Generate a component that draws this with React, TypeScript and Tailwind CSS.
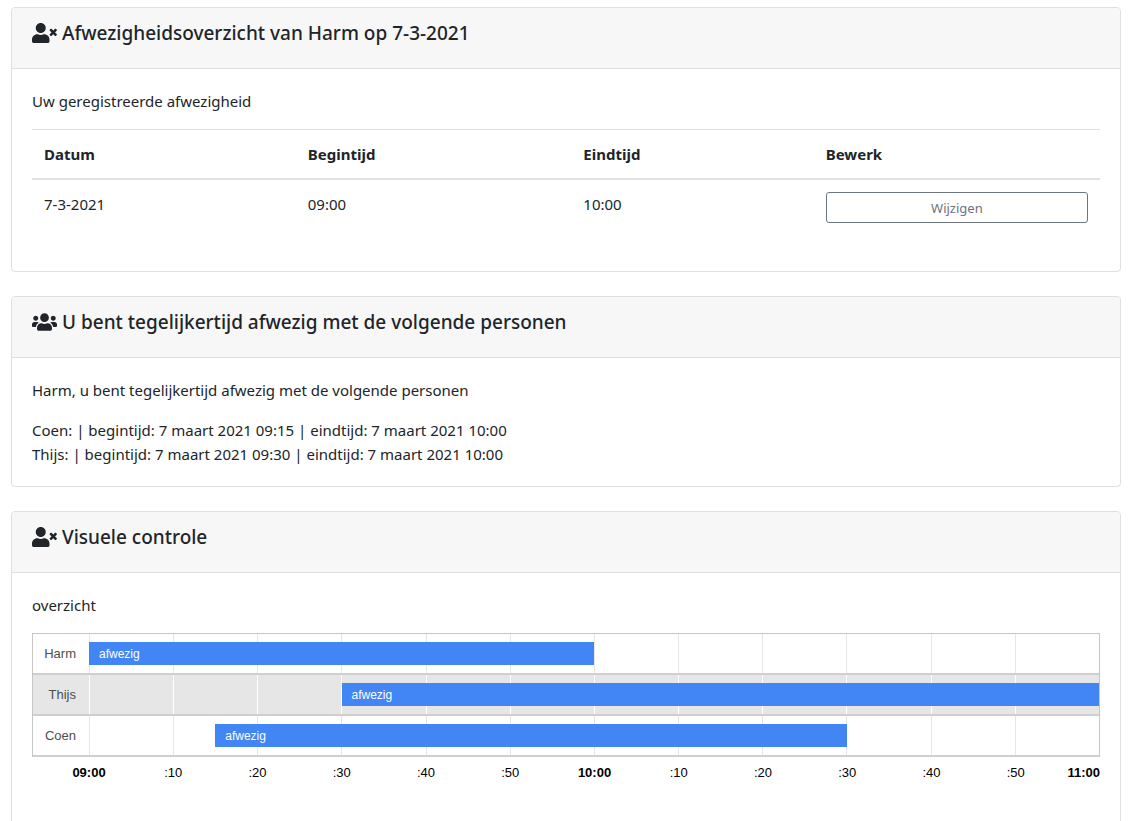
import type { ReactNode } from "react";
import { FaUserTimes, FaUsers } from "react-icons/fa";

type Absence = { name: string; start: number; end: number };

const CHART_START = 540;
const CHART_END = 660;

const absences: Absence[] = [
  { name: "Harm", start: 540, end: 600 },
  { name: "Thijs", start: 570, end: 660 },
  { name: "Coen", start: 555, end: 630 },
];

const ticks = ["09:00", ":10", ":20", ":30", ":40", ":50", "10:00", ":10", ":20", ":30", ":40", ":50", "11:00"];

const percent = (minutes: number) => `${(minutes / (CHART_END - CHART_START)) * 100}%`;

function Card({ icon, title, children }: { icon: ReactNode; title: string; children: ReactNode }) {
  return (
    <section className="overflow-hidden rounded border border-[#dfdfdf] bg-white">
      <header className="border-b border-[#dfdfdf] bg-[#f7f7f7] px-5 pt-[13px] pb-[23px]">
        <h5 className="flex items-center gap-[5px] text-[19px] leading-6 font-medium">
          {icon}
          {title}
        </h5>
      </header>
      <div className="p-5">{children}</div>
    </section>
  );
}

function TimelineRow({ absence, shaded }: { absence: Absence; shaded: boolean }) {
  return (
    <div
      className={`grid h-[41px] grid-cols-[56px_1fr] border-b-2 border-[#cfcfcf] ${shaded ? "bg-[#e6e6e6]" : "bg-white"}`}
    >
      <div className="self-center pr-[13px] text-right text-[13px] leading-4 text-[#4d4d4d]">{absence.name}</div>
      <div className="grid">
        <div className="col-start-1 row-start-1 grid grid-cols-12">
          {ticks.slice(1).map((_, i) => (
            <div key={i} className={`border-l ${shaded ? "border-white" : "border-[#e6e6e6]"}`} />
          ))}
        </div>
        <div className="col-start-1 row-start-1 flex items-center">
          <div
            className="h-[23px] bg-[#4285f4] pl-[10px] text-[12px] leading-[25px] text-white"
            style={{
              marginLeft: percent(absence.start - CHART_START),
              width: percent(absence.end - absence.start),
            }}
          >
            afwezig
          </div>
        </div>
      </div>
    </div>
  );
}

function Timeline() {
  return (
    <div className="font-['Liberation_Sans',Arial,sans-serif]">
      <div className="border-x border-t border-[#c6c6c6]">
        {absences.map((absence, i) => (
          <TimelineRow key={absence.name} absence={absence} shaded={i % 2 === 1} />
        ))}
      </div>
      <div className="mt-2 flex justify-between pl-[57px] text-[13px] leading-4 text-black">
        {ticks.map((tick, i) => (
          <div
            key={i}
            className={`flex w-0 ${i === ticks.length - 1 ? "justify-end" : "justify-center"} ${i % 6 === 0 ? "font-bold" : ""}`}
          >
            <span>{tick}</span>
          </div>
        ))}
      </div>
    </div>
  );
}

export default function App() {
  return (
    <main className="flex flex-col gap-6 pt-[7px] pr-[13px] pb-6 pl-[11px] font-['Noto_Sans','Segoe_UI',sans-serif] text-[15px] leading-6 text-[#212529]">
      <Card icon={<FaUserTimes className="h-5 w-[25px]" />} title="Afwezigheidsoverzicht van Harm op 7-3-2021">
        <p className="mb-4">Uw geregistreerde afwezigheid</p>
        <table className="mb-4 w-full table-fixed border-separate border-spacing-0 text-left">
          <thead>
            <tr className="[&>th]:border-t [&>th]:border-b-2 [&>th]:border-[#dee2e6] [&>th]:p-3 [&>th]:font-bold">
              <th className="w-[24.7%]">Datum</th>
              <th className="w-[25.8%]">Begintijd</th>
              <th className="w-[22.7%]">Eindtijd</th>
              <th>Bewerk</th>
            </tr>
          </thead>
          <tbody>
            <tr className="align-top [&>td]:p-3">
              <td>7-3-2021</td>
              <td>09:00</td>
              <td>10:00</td>
              <td>
                <button
                  type="button"
                  className="block w-full rounded-[3px] border border-[#6c757d] px-2 pt-[5px] pb-[3px] text-[13px] leading-[21px] text-[#6c757d]"
                >
                  Wijzigen
                </button>
              </td>
            </tr>
          </tbody>
        </table>
      </Card>

      <Card icon={<FaUsers className="h-5 w-[25px]" />} title="U bent tegelijkertijd afwezig met de volgende personen">
        <p className="mb-4">Harm, u bent tegelijkertijd afwezig met de volgende personen</p>
        <p>Coen: | begintijd: 7 maart 2021 09:15 | eindtijd: 7 maart 2021 10:00</p>
        <p>Thijs: | begintijd: 7 maart 2021 09:30 | eindtijd: 7 maart 2021 10:00</p>
      </Card>

      <Card icon={<FaUserTimes className="h-5 w-[25px]" />} title="Visuele controle">
        <p className="mb-4">overzicht</p>
        <Timeline />
        <div className="h-16" />
      </Card>
    </main>
  );
}
